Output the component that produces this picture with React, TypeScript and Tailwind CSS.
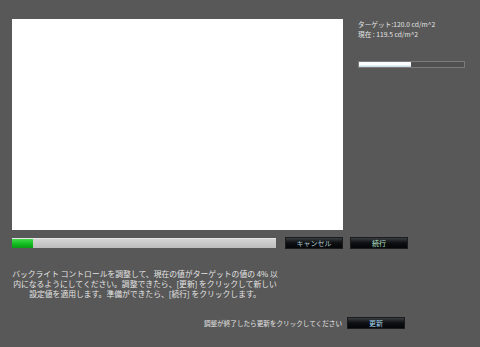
const font = "font-['Noto_Sans_CJK_JP','Noto_Sans',sans-serif]";

function DarkButton({ label, width, color }: { label: string; width: string; color: string }) {
  return (
    <div
      className={`flex h-[12px] ${width} items-center justify-center border border-[#1c1c1c] bg-gradient-to-b from-[#3a3e42] via-[#0d0f11] to-[#050607] text-[7px] leading-none ${color}`}
    >
      {label}
    </div>
  );
}

export default function App() {
  return (
    <div className={`flex h-[347px] w-[480px] flex-col bg-[#585858] text-[#e4e4e4] ${font}`}>
      <div className="flex pl-[12px] pt-[19px]">
        <div className="h-[211px] w-[331px] bg-white" />
        <div className="ml-[15px] flex flex-col">
          <div className="text-[6.7px] leading-[10px]">ターゲット:120.0 cd/m^2</div>
          <div className="text-[6.7px] leading-[10px]">現在 : 119.5 cd/m^2</div>
          <div className="mt-[22px] flex h-[7px] w-[107px] border border-[#7a7a7a] bg-[#505050]">
            <div className="h-full w-[52px] bg-gradient-to-b from-[#f4fbfd] via-white to-[#b9d6de]" />
          </div>
        </div>
      </div>

      <div className="mt-[7px] flex items-center pl-[12px]">
        <div className="flex h-[10px] w-[264px] border-t border-[#e6e6e6] bg-gradient-to-b from-[#d4d4d4] to-[#bdbdbd]">
          <div className="h-full w-[21px] bg-gradient-to-b from-[#3fd84a] via-[#14c021] to-[#0a9a16]" />
        </div>
        <div className="ml-[9px]">
          <DarkButton label="キャンセル" width="w-[58px]" color="text-[#a9c3cf]" />
        </div>
        <div className="ml-[7px]">
          <DarkButton label="続行" width="w-[58px]" color="text-[#b8e0c8]" />
        </div>
      </div>

      <div className="mt-[20px] w-[290px] whitespace-nowrap text-center text-[7.8px] leading-[10px]">
        バックライト コントロールを調整して、現在の値がターゲットの値の 4% 以
        <br />
        内になるようにしてください。調整できたら、[更新] をクリックして新しい
        <br />
        設定値を適用します。準備ができたら、[続行] をクリックします。
      </div>

      <div className="mt-[18px] flex w-[405px] items-center justify-end">
        <div className="text-[6.6px] leading-none">調整が終了したら更新をクリックしてください</div>
        <div className="ml-[5px]">
          <DarkButton label="更新" width="w-[58px]" color="text-[#a8d8f0]" />
        </div>
      </div>
    </div>
  );
}
